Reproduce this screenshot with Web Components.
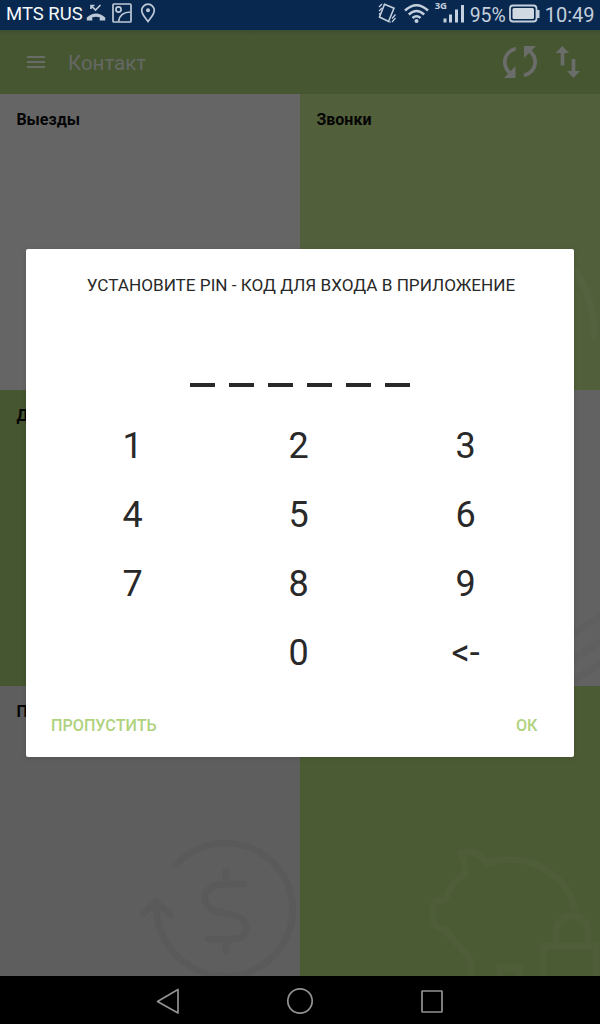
<!DOCTYPE html>
<html lang="ru"><head><meta charset="utf-8"><title>Контакт</title>
<style>html,body{margin:0;width:600px;height:1024px;overflow:hidden;background:#000;font-family:Roboto,sans-serif}</style></head>
<body><contact-app></contact-app>
<script>
const define=(name,html)=>{
  const t=document.createElement('template');t.innerHTML=html;
  customElements.define(name,class extends HTMLElement{
    constructor(){super();this.attachShadow({mode:'open'}).append(t.content.cloneNode(true));}
  });
};
define('status-bar',`<style>
:host{display:flex;height:30px;box-sizing:border-box;background:#08284f;color:#c4d0dd;align-items:stretch;overflow:hidden}
svg{display:block;flex:none}
.carrier{font-size:18.5px;line-height:28px;color:#f5f8fb;width:80px;padding-left:6px;white-space:nowrap}
.pct{font-size:19.4px;line-height:31px;width:39px;white-space:nowrap}
.time{font-size:20px;line-height:31px;white-space:nowrap}
.space{flex:1}
.net{font:bold 9.5px/10px "Open Sans",Roboto,sans-serif;width:13px;padding-top:1px}
.signal{width:28px;height:30px;margin-left:-11px;margin-right:5px}
</style>
<span class="carrier">MTS RUS</span>
<svg width="72" height="30" viewBox="86 0 72 30" fill="none" stroke="#bdc9d7" stroke-width="1.7">
<path d="M91.500 6l4 4 5-5M91 9V5.500h3.500"/><path d="M86.800 17.500q9.200-8 18.400 0v3h-5.500v-3.200q-3.700-1.300-7.400 0v3.200h-5.500z" fill="#bdc9d7" stroke="none"/>
<rect x="113" y="4" width="18" height="18" rx="1"/><circle cx="118.500" cy="9.500" r="2.600"/><path d="M118.500 21.500q1.500-9.500 12-9.500"/>
<path d="M148 21.500c-3.500-4.500-6.300-7.500-6.300-11a6.300 6.300 0 0 1 12.600 0c0 3.500-2.800 6.500-6.300 11z"/><circle cx="148" cy="10.300" r="2" fill="#bdc9d7" stroke="none"/></svg>
<span class="space"></span>
<svg width="60" height="30" viewBox="375 0 60 30" fill="none" stroke="#c4d0dd" stroke-width="1.600">
<path d="M384.500 4.300l9.500 4-5.500 13.200-9-4.500z"/><path d="M379 7l3-3M379 11l3-3M379 14.500l1.500-1.500M392 22l3.500-4M392 18.500l3.500-4M389.500 22.500l1-1" stroke-width="1.200"/>
<path d="M405 10.500q11.500-10.500 23 0M408.800 14.500q7.700-7 15.400 0M412.500 18q4-3.600 8 0" stroke-width="2.500"/><circle cx="416.500" cy="21" r="2" fill="#c4d0dd" stroke="none"/></svg>
<span class="net">3G</span>
<svg class="signal" viewBox="436 0 28 30" fill="#c4d0dd"><path d="M442.500 18.500h3v4h-3zM448 14.500h3v8h-3zM454 9.500h3v13h-3zM460 5h3v17.500h-3z"/></svg>
<span class="pct">95%</span>
<svg width="36" height="30" viewBox="509 0 36 30"><rect x="510" y="5.500" width="26.500" height="16" rx="3" fill="none" stroke="#c4d0dd" stroke-width="1.800"/><rect x="512.500" y="8" width="21.500" height="11" rx="1.500" fill="#d0d9e2"/><path d="M537 10h2.500v8H537z" fill="#c4d0dd"/></svg>
<span class="time">10:49</span><span style="width:5.500px"></span>`);
define('app-bar',`<style>
:host{display:flex;height:64px;background:linear-gradient(#3c4e30,#455631 5px);align-items:stretch;color:#666865}
h1{font-size:20.500px;font-weight:400;line-height:67px;margin:0;flex:1}svg{display:block}
</style>
<svg width="68" height="64" viewBox="0 30 68 64" fill="#696b67"><path d="M27 56h18v2H27zM27 61h18v2H27zM27 66h18v2H27z"/></svg>
<h1>Контакт</h1>
<svg width="100" height="64" viewBox="500 30 100 64" fill="none" stroke="#6b6d6a" stroke-width="3.700">
<path d="M515.800 48.500C502 53 502 67 511.500 74.500M524 75.500C538 71 538 57 528.500 50"/><path d="M504 78h11.500V66zM524 46h12L524 58z" fill="#6b6d6a" stroke="none"/>
<path d="M562.500 65.500V52M573.500 59v13"/><path d="M555.500 53l6.800-7 6.800 7zM567 71h13l-6.500 7z" fill="#6b6d6a" stroke="none"/></svg>`);
define('home-tile',`<style>
:host{display:block;overflow:hidden;box-sizing:border-box;padding:16px 16px 0;background:var(--tile)}
b{display:block;font-size:16px;font-weight:700;line-height:19px;color:#050505;padding-left:.4px}
::slotted(svg){display:block;margin:-35px -16px 0}
</style><b><slot name="title"></slot></b><slot></slot>`);
define('tile-grid',`<style>
:host{display:grid;grid-template-columns:300px 300px;grid-template-rows:296px 296px 290px;height:882px;flex:none}
svg{fill:none;stroke-linecap:round;stroke-linejoin:round}
</style>
<home-tile style="--tile:#656565"><span slot="title">Выезды</span></home-tile>
<home-tile style="--tile:#515f3b"><span slot="title">Звонки</span>
<svg width="300" height="296" viewBox="300 94 300 296" stroke="#54623f" stroke-width="7"><path d="M570 266Q594 291 594 337"/></svg></home-tile>
<home-tile style="--tile:#455631"><span slot="title">Д</span></home-tile>
<home-tile style="--tile:#626262"><span slot="title"></span>
<svg style="margin-top:-16px" width="300" height="296" viewBox="300 390 300 296" stroke="#5f5f5f" stroke-width="7"><path d="M560 642l42-26M565 664l38-24M568 684l36-23"/></svg></home-tile>
<home-tile style="--tile:#5e5e5e"><span slot="title">П</span>
<svg width="300" height="290" viewBox="0 686 300 290" stroke="#5a5a5a" stroke-width="6.500"><path d="M176 865A67 66.500 0 1 1 190 966Q157 946 155.500 902M143 914l12.500-12 14.500 12M244 884h-19c-27 0-24 24-9 27l17 4c20 5 16 24 0 24h-25M226 871v13M226 939v12"/></svg></home-tile>
<home-tile style="--tile:#4b5b33"><span slot="title"></span>
<svg style="margin-top:-16px" width="300" height="290" viewBox="300 686 300 290" stroke="#4f5e39" stroke-width="7"><path d="M574 907C568 877 530 850 487 863C477 850 467 851 461 853L465 864V874Q451 883 445 900Q433 899 433 909V920Q434 929 446 929C454 946 471 952 471 964V980M500 980V968H520V980M556 943V931C558 911 586 911 588 931V943M543 980V946H596V980"/></svg></home-tile>`);
define('key-pad',`<style>
:host{display:grid;grid-template-columns:repeat(3,167px);grid-auto-rows:69px;justify-content:center;font-size:36px;color:#292929;text-align:center;line-height:69px}
span:nth-of-type(3n+1){padding-left:2px}
</style><span>1</span><span>2</span><span>3</span><span>4</span><span>5</span><span>6</span><span>7</span><span>8</span><span>9</span><span></span><span>0</span><span>&lt;-</span>`);
define('pin-dialog',`<style>
:host{display:flex;flex-direction:column;box-sizing:border-box;width:548px;height:508px;background:#fff;border-radius:2px;box-shadow:0 1px 5px #0002}
h2{font-size:17.150px;font-weight:400;line-height:20px;margin:26px 0 0;text-align:center;color:#292929;white-space:nowrap;padding-left:2px}
.slots{display:flex;gap:14px;justify-content:center;margin-top:88px}
.slots i{width:25px;height:4px;background:#292929}
key-pad{margin:25px 3px 0 0}
footer{display:flex;justify-content:space-between;padding:28px 36.500px 0 25px;color:#afd27d;font-size:16.150px;font-weight:500;line-height:20px}
</style><h2>УСТАНОВИТЕ PIN - КОД ДЛЯ ВХОДА В ПРИЛОЖЕНИЕ</h2>
<div class="slots"><i></i><i></i><i></i><i></i><i></i><i></i></div>
<key-pad></key-pad><footer><span>ПРОПУСТИТЬ</span><span>ОК</span></footer>`);
define('nav-bar',`<style>:host,svg{display:block;height:48px}:host{background:#000}</style>
<svg width="600" height="48" viewBox="0 976 600 48" fill="none" stroke="#929292" stroke-width="1.700" stroke-linejoin="round"><path d="M157.500 1001.500l20.500-12v23.500z"/><circle cx="300" cy="1001" r="12.200"/><rect x="422" y="991" width="20" height="21" rx=".5"/></svg>`);
define('contact-app',`<style>
:host{display:flex;flex-direction:column;width:600px;height:1024px;position:relative;overflow:hidden}
pin-dialog{position:absolute;left:26px;top:249px}
</style><status-bar></status-bar><app-bar></app-bar><tile-grid></tile-grid><nav-bar></nav-bar><pin-dialog></pin-dialog>`);
</script></body></html>
